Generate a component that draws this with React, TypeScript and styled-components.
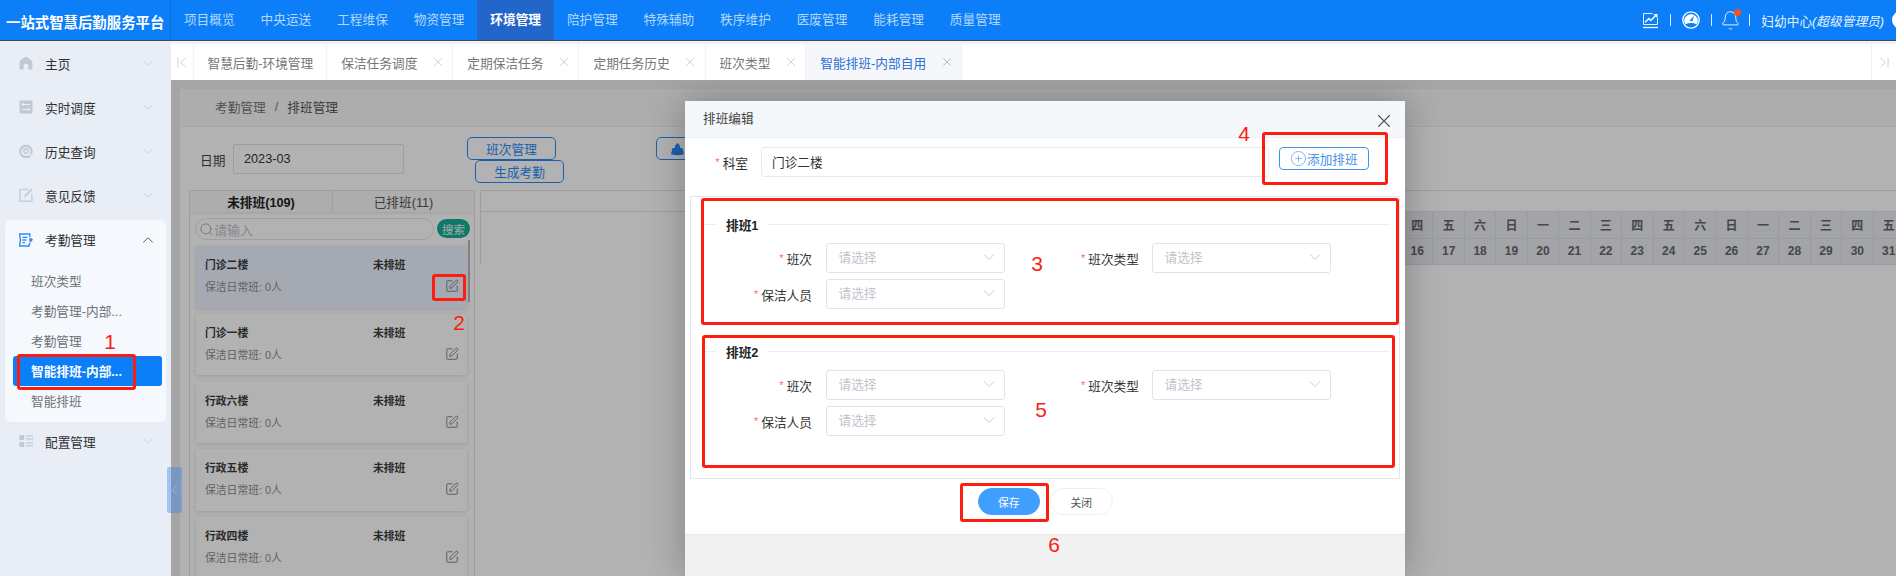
// App.tsx
import React from 'react';
import styled, { createGlobalStyle } from 'styled-components';
import { Bell, ChevronDown, ChevronFirst, ChevronLast, ChevronLeft, ChevronUp, CirclePlus, Search, SquarePen, X } from 'lucide-react';

const GlobalStyle = createGlobalStyle`
  html, body {
    margin: 0;
    padding: 0;
    overflow: hidden;
  }
  body {
    font-family: "Liberation Sans", "Noto Sans CJK SC", sans-serif;
    font-size: 12.7px;
    color: #303133;
  }
  * {
    box-sizing: border-box;
  }
`;

const Page = styled.div`
  position: relative;
  width: 1896px;
  height: 576px;
  overflow: hidden;
  display: flex;
  flex-direction: column;
  background: #fff;
`;

// top bar
const TopBar = styled.header`
  height: 41px;
  flex: none;
  display: flex;
  background: #0b7ef8;
  border-bottom: 1px solid #3d4a5c;
`;

const Logo = styled.div`
  width: 171px;
  flex: none;
  padding: 2px 0 0 6px;
  display: flex;
  align-items: center;
  color: #fff;
  font-size: 14.4px;
  font-weight: 700;
  white-space: nowrap;
  border-right: 1px solid #0a6bd2;
`;

const Nav = styled.nav`
  display: flex;
  flex: 1;
`;

const NavItem = styled.a<{ $active?: boolean }>`
  width: 76.6px;
  display: flex;
  justify-content: center;
  align-items: center;
  padding-bottom: 3px;
  font-size: 12.7px;
  white-space: nowrap;
  color: ${(p) => (p.$active ? '#fff' : '#b4d8fd')};
  font-weight: ${(p) => (p.$active ? 700 : 400)};
  background: ${(p) => (p.$active ? '#2266ca' : 'transparent')};
`;

const UserBar = styled.div`
  display: flex;
  align-items: center;
  flex: none;
  color: #fff;
  margin-right: -14px;
`;

const Sep = styled.span`
  width: 1px;
  height: 12px;
  background: #dcecff;
  margin: 0 11px;
`;

const BellBox = styled.span`
  position: relative;
  display: flex;
  margin: 0 -3px;
`;

const RedDot = styled.i`
  position: absolute;
  top: -1px;
  right: 0;
  width: 7px;
  height: 7px;
  border-radius: 50%;
  background: #f4511e;
`;

const UserName = styled.span`
  white-space: nowrap;
  color: #e8f3ff;
  margin-right: 8px;
  em {
    font-style: italic;
  }
`;

const Avatar = styled.span`
  width: 18px;
  height: 18px;
  border-radius: 50%;
  background: #fff;
`;

// sidebar
const Body = styled.div`
  flex: 1;
  display: flex;
  min-height: 0;
`;

const Sidebar = styled.aside`
  width: 171px;
  flex: none;
  background: #e9edf5;
`;

const MenuHead = styled.div<{ $open?: boolean }>`
  height: ${(p) => (p.$open ? '39px' : '44px')};
  display: flex;
  align-items: center;
  padding: 0 14px 0 19px;
  gap: 12px;
  svg:first-child {
    flex: none;
  }
  span {
    flex: 1;
    color: #303133;
  }
`;

const MenuCard = styled.div`
  margin: 3px 5px -3px;
  height: 202px;
  border-radius: 5px;
  background: #f5f8fc;
  ${MenuHead} {
    padding: 0 9px 0 14px;
  }
`;

const SubList = styled.div`
  padding-top: 7px;
`;

const SubItem = styled.div<{ $active?: boolean }>`
  height: 30px;
  margin: 0 4px 0 8px;
  padding: 0 0 2px 18px;
  display: flex;
  align-items: center;
  border-radius: 3px;
  white-space: nowrap;
  color: ${(p) => (p.$active ? '#fff' : '#6f7278')};
  font-weight: ${(p) => (p.$active ? 700 : 400)};
  background: ${(p) => (p.$active ? '#0b7ef8' : 'transparent')};
`;

const CollapseHandle = styled.div`
  position: absolute;
  left: 167px;
  top: 467px;
  width: 15px;
  height: 46px;
  display: flex;
  align-items: center;
  justify-content: center;
  border-radius: 2px;
  background: rgba(50, 130, 235, 0.38);
  color: #b9cfeb;
  z-index: 3;
`;

// main area
const Main = styled.main`
  flex: 1;
  min-width: 0;
  display: flex;
  flex-direction: column;
  background: #f0f2f5;
`;

const TabStrip = styled.div`
  height: 36px;
  margin-top: 3px;
  flex: none;
  display: flex;
  align-items: stretch;
  background: #fff;
`;

const TabArrow = styled.div<{ $end?: boolean }>`
  width: ${(p) => (p.$end ? '25px' : '22.5px')};
  flex: none;
  margin-left: ${(p) => (p.$end ? 'auto' : '0')};
  display: flex;
  align-items: center;
  justify-content: center;
  color: #c9c9c9;
  border-right: ${(p) => (p.$end ? '0' : '1px solid #f2f2f2')};
  border-left: ${(p) => (p.$end ? '1px solid #f2f2f2' : '0')};
`;

const Tab = styled.div<{ $active?: boolean; $plain?: boolean }>`
  display: flex;
  align-items: center;
  padding: 0 ${(p) => (p.$plain ? '13px' : '10px')} 0 14px;
  white-space: nowrap;
  border-right: 1px solid #f2f2f2;
  color: ${(p) => (p.$active ? '#2d6fd2' : '#767676')};
  background: ${(p) => (p.$active ? '#f5f7fa' : '#fff')};
  svg {
    margin: 0 -2.5px 0 13.5px;
    color: ${(p) => (p.$active ? '#8aa9dc' : '#bdbdbd')};
  }
`;

const Content = styled.div`
  position: relative;
  flex: 1;
  min-height: 0;
  padding: 9px 0 0 9px;
  display: flex;
  flex-direction: column;
  overflow: hidden;
  background: #ececec;
`;

const Breadcrumb = styled.div`
  height: 38px;
  flex: none;
  padding: 0 0 2px 35px;
  display: flex;
  align-items: center;
  gap: 9px;
  color: #777;
  background: #f8f8f9;
  border-bottom: 1px solid #efefef;
  b {
    font-weight: 400;
    color: #555;
  }
`;

const Panel = styled.div`
  flex: 1;
  min-height: 0;
  background: #fff;
`;

const Toolbar = styled.div`
  height: 63px;
  padding: 10px 0 0 20px;
  display: flex;
  align-items: flex-start;
`;

const DateLabel = styled.label`
  margin-top: 13px;
  width: 33px;
  color: #444;
`;

const DateInput = styled.div`
  margin-top: 7px;
  width: 171px;
  height: 30px;
  padding-left: 10px;
  display: flex;
  align-items: center;
  color: #333;
  border: 1px solid #e3e3e3;
  border-radius: 2px;
`;

const ButtonStack = styled.div`
  width: 98px;
  margin-left: 63px;
  display: flex;
  flex-direction: column;
`;

const OutlineButton = styled.button<{ $shift?: number }>`
  width: 89px;
  height: 23px;
  flex: none;
  margin-left: ${(p) => p.$shift || 0}px;
  padding: 0;
  font: inherit;
  font-size: 12.7px;
  color: #258cfb;
  background: #fff;
  border: 1px solid #258cfb;
  border-radius: 5px;
`;

const ShipButton = styled(OutlineButton)`
  margin-left: 91px;
  padding-left: 14px;
  display: flex;
  align-items: center;
`;

const Board = styled.div`
  height: 386px;
  padding-left: 9px;
  display: flex;
  align-items: flex-start;
`;

const ShiftColumn = styled.section`
  position: relative;
  width: 286px;
  height: 100%;
  flex: none;
  overflow: hidden;
  border: 1px solid #e3e3e3;
  border-bottom: 0;
`;

const ColumnTabs = styled.div`
  height: 21px;
  display: grid;
  grid-template-columns: 142px 1fr;
  background: #f8f8f8;
  box-shadow: 0 1px 3px rgba(0, 0, 0, 0.12);
`;

const ColumnTab = styled.div<{ $active?: boolean }>`
  display: flex;
  align-items: center;
  justify-content: center;
  color: ${(p) => (p.$active ? '#222' : '#555')};
  font-weight: ${(p) => (p.$active ? 700 : 400)};
  & + & {
    border-left: 1px solid #e3e3e3;
  }
`;

const SearchRow = styled.div`
  padding: 6px 0 0 5px;
  height: 34px;
  display: flex;
  align-items: flex-start;
  gap: 3px;
`;

const SearchBox = styled.div`
  width: 239px;
  height: 22px;
  padding-left: 3px;
  display: flex;
  align-items: center;
  color: #c0c4cc;
  font-size: 13px;
  border: 1px solid #e6e6e6;
  border-radius: 11px;
  svg {
    color: #8f9399;
  }
`;

const SearchButton = styled.button`
  width: 33px;
  height: 19px;
  margin-top: 1px;
  padding: 0;
  font: inherit;
  font-size: 11.5px;
  color: #e4f6f2;
  background: #14ae92;
  border: 0;
  border-radius: 10px;
`;

const CardList = styled.div`
  margin-left: 6px;
  width: 271px;
  display: flex;
  flex-direction: column;
  gap: 6.3px;
`;

const Card = styled.div<{ $selected?: boolean }>`
  height: 61.5px;
  flex: none;
  padding: 11px 8px 0 9px;
  display: grid;
  grid-template-columns: 168px 1fr;
  grid-template-rows: 14px 14px;
  row-gap: 8px;
  align-items: center;
  font-size: 10.8px;
  background: ${(p) => (p.$selected ? '#edf4ff' : '#fff')};
  box-shadow: 0 1px 4px rgba(0, 0, 0, 0.14);
  b {
    color: #3c3c3c;
  }
  span {
    color: #8c8c8c;
  }
  svg {
    justify-self: end;
    color: #555;
  }
`;

const Scrollbar = styled.i`
  position: absolute;
  left: 278px;
  top: 49px;
  width: 2px;
  height: 62px;
  background: #b9b9b9;
`;

const Schedule = styled.section`
  flex: 1;
  min-width: 0;
  margin-left: 5px;
  overflow: hidden;
  border-left: 1px solid #e3e3e3;
`;

const ScheduleHead = styled.div`
  height: 22px;
  border-top: 1px solid #e3e3e3;
  border-bottom: 1px solid #e3e3e3;
`;

const CalendarRow = styled.div`
  display: flex;
  height: 26.5px;
  margin-left: 921px;
`;

const CalendarCell = styled.div`
  width: 31.45px;
  flex: none;
  display: flex;
  align-items: center;
  justify-content: center;
  font-size: 12px;
  font-weight: 700;
  color: #666;
  background: #e8ebf0;
  border-right: 1px solid #dcdfe4;
  border-bottom: 1px solid #dcdfe4;
`;

const Overlay = styled.div`
  position: absolute;
  inset: 0;
  background: rgba(0, 0, 0, 0.3);
`;

// dialog
const Dialog = styled.div`
  position: absolute;
  left: 514px;
  top: 21px;
  bottom: 0;
  width: 720px;
  display: flex;
  flex-direction: column;
  background: #fff;
  box-shadow: 0 0 36px rgba(0, 0, 0, 0.28);
`;

const DialogHead = styled.div`
  height: 36.5px;
  flex: none;
  padding: 0 10px 2px 18px;
  display: flex;
  align-items: center;
  justify-content: space-between;
  color: #444;
  background: #f5f8fb;
  border-bottom: 1px solid #eef0f3;
  svg {
    margin-top: 7px;
    color: #555;
  }
`;

const DeptRow = styled.div`
  height: 58.5px;
  flex: none;
  padding-top: 9.5px;
  display: flex;
  align-items: flex-start;
`;

const FieldLabel = styled.label<{ $width: number }>`
  width: ${(p) => p.$width}px;
  height: 30px;
  flex: none;
  display: flex;
  align-items: center;
  justify-content: flex-end;
  color: #333;
  i {
    color: #f56c6c;
    font-style: normal;
    margin-right: 3px;
    font-size: 11px;
  }
`;

const DeptInput = styled.div`
  width: 508px;
  height: 30px;
  margin-left: 13px;
  padding: 0 0 2px 10px;
  display: flex;
  align-items: center;
  color: #333;
  border: 1px solid #e8eaef;
  border-radius: 3px;
`;

const AddButton = styled.button`
  width: 90px;
  height: 23px;
  margin-left: 10px;
  padding: 0 0 0 10px;
  display: flex;
  align-items: center;
  font: inherit;
  font-size: 12.7px;
  color: #4a8fe7;
  background: #fff;
  border: 1px solid #3f94ee;
  border-radius: 4px;
`;

const FormPanel = styled.div`
  height: 283px;
  flex: none;
  margin: 0 5px;
  padding-top: 20px;
  border: 1px solid #e4e7ed;
`;

const ShiftSection = styled.div`
  & + & {
    margin-top: 35px;
  }
`;

const Legend = styled.div`
  height: 15px;
  margin: 0 9px 11px 12px;
  display: flex;
  align-items: center;
  font-weight: 700;
  color: #222;
  &::before {
    content: '';
    width: 14px;
    height: 1px;
    margin-right: 9px;
    background: #ebeef5;
  }
  &::after {
    content: '';
    flex: 1;
    height: 1px;
    margin-left: 9px;
    background: #ebeef5;
  }
`;

const FormRow = styled.div`
  display: flex;
  height: 30px;
  & + & {
    margin-top: 6px;
  }
`;

const SelectBox = styled.div<{ $gap: number }>`
  width: 179px;
  height: 30px;
  flex: none;
  margin-left: ${(p) => p.$gap}px;
  padding: 0 5px 3px 12px;
  display: flex;
  align-items: center;
  justify-content: space-between;
  color: #c0c4cc;
  border: 1px solid #dfe3ea;
  border-radius: 3px;
`;

const DialogActions = styled.div`
  height: 55px;
  flex: none;
  padding-top: 9px;
  display: flex;
  justify-content: center;
  align-items: flex-start;
  gap: 10px;
`;

const PillButton = styled.button<{ $primary?: boolean }>`
  width: 62.5px;
  height: 27px;
  padding: 0;
  font: inherit;
  font-size: 10.8px;
  color: ${(p) => (p.$primary ? '#fff' : '#555')};
  background: ${(p) => (p.$primary ? '#409eff' : '#fff')};
  border: 1px solid ${(p) => (p.$primary ? '#409eff' : '#ebeef5')};
  border-radius: 14px;
`;

const DialogFoot = styled.div`
  flex: 1;
  background: #f1f1f1;
  border-top: 1px solid #e9e9e9;
`;

// red marks drawn over the screenshot
const MarkBox = styled.div<{ $x: number; $y: number; $w: number; $h: number }>`
  position: absolute;
  left: ${(p) => p.$x}px;
  top: ${(p) => p.$y}px;
  width: ${(p) => p.$w}px;
  height: ${(p) => p.$h}px;
  border: 3px solid #fb1d10;
  border-radius: 3px;
  z-index: 5;
`;

const MarkNumber = styled.span<{ $x: number; $y: number }>`
  position: absolute;
  left: ${(p) => p.$x}px;
  top: ${(p) => p.$y}px;
  transform: translate(-50%, -50%);
  font-size: 21px;
  line-height: 1;
  color: #fb1d10;
  z-index: 5;
`;

const navItems = ['项目概览', '中央运送', '工程维保', '物资管理', '环境管理', '陪护管理', '特殊辅助', '秩序维护', '医废管理', '能耗管理', '质量管理'];
const tabs = ['保洁任务调度', '定期保洁任务', '定期任务历史', '班次类型'];
const subItems = ['班次类型', '考勤管理-内部...', '考勤管理'];
const cards = ['门诊二楼', '门诊一楼', '行政六楼', '行政五楼', '行政四楼'];
const weekNames = ['日', '一', '二', '三', '四', '五', '六'];
// March 2023, the days left of the dialog are covered by it
const days = Array.from({ length: 16 }, (_, i) => i + 16);

const boxes = [
  { x: 17, y: 354, w: 119, h: 36 },
  { x: 432, y: 274, w: 34, h: 27 },
  { x: 1262, y: 132, w: 126, h: 53 },
  { x: 701, y: 198, w: 698, h: 127 },
  { x: 702, y: 335, w: 693, h: 133 },
  { x: 960, y: 483, w: 89, h: 39 },
];

const numbers = [
  { x: 110, y: 341, n: 1 },
  { x: 459, y: 322, n: 2 },
  { x: 1037, y: 263, n: 3 },
  { x: 1244, y: 133, n: 4 },
  { x: 1041, y: 409, n: 5 },
  { x: 1054, y: 544, n: 6 },
];

const HomeIcon = () => (
  <svg width="14" height="14" viewBox="0 0 14 14" fill="#c3c8d6">
    <path d="M7 .6c.4 0 5.8 3.9 6.2 5 .2.5.3 7.8.3 7.8H9.4V9.6c0-1-1-1.8-2.4-1.8s-2.4.8-2.4 1.8v3.8H.5s.1-7.3.3-7.8C1.2 4.5 6.6.6 7 .6z" />
  </svg>
);

const DispatchIcon = () => (
  <svg width="14" height="14" viewBox="0 0 14 14">
    <rect x=".5" y=".5" width="13" height="13" rx="1" fill="#c3c8d6" />
    <path d="M3 4.5h8M3 9.5h8" stroke="#e9edf5" strokeWidth="1.1" />
    <circle cx="4" cy="4.5" r="1.3" fill="#e9edf5" />
    <circle cx="10" cy="9.5" r="1.3" fill="#e9edf5" />
  </svg>
);

const HistoryIcon = () => (
  <svg width="14" height="14" viewBox="0 0 14 14" fill="none" stroke="#c3c8d6">
    <path d="M11.2 11.4A5.7 5.7 0 1 1 12.7 7c0 1.2-.3 2.3-.9 3.2" strokeWidth="2.2" />
    <circle cx="7" cy="7" r="2.2" strokeWidth="1.4" />
  </svg>
);

const FeedbackIcon = () => (
  <svg width="14" height="14" viewBox="0 0 14 14" fill="none" stroke="#c9cdd9" strokeWidth="1.5">
    <path d="M9 1.5H1v11.8h11.8V6" />
    <path d="M5.5 8.8 12.8 1.2" strokeWidth="2" />
  </svg>
);

const AttendanceIcon = () => (
  <svg width="16" height="14" viewBox="0 0 16 14" fill="none" stroke="#2f8cf5" strokeWidth="1.4" style={{ marginLeft: -1, marginRight: -1 }}>
    <path d="M11.8 4V1H1.6l.8 6-.8 6h9.4l.8-3" />
    <path d="M4.4 4.4h5M4.4 7h4M4.4 9.6h2.6" />
    <path d="M11 5.2h2.6l1.4 1.6-3 3.2" fill="#2f8cf5" stroke="none" />
  </svg>
);

const ConfigIcon = () => (
  <svg width="14" height="14" viewBox="0 0 14 14" fill="#c3c8d6">
    <rect x=".2" y="1" width="5.2" height="5" rx="1.5" />
    <rect x=".2" y="8" width="5.2" height="5" rx="1.5" />
    <path d="M7 1.2h7v1.4H7zM7 4.2h7v1.4H7zM7 8.2h7v1.4H7zM7 11.2h7v1.4H7z" />
  </svg>
);

const ChartIcon = () => (
  <svg width="17" height="17" viewBox="0 0 17 17" fill="none" stroke="#fff">
    <path d="M1.5 12.5v-11h9M15.5 6v6.500h-14" strokeWidth=".9" />
    <path d="M3.2 10.200 6.800 6.500l2 2L14 3.200" strokeWidth="1.500" />
    <path d="M11.200 2h4.300v4.300z" fill="#fff" stroke="none" />
    <path d="M1 15.500h15" strokeWidth="1.300" />
  </svg>
);

const GaugeIcon = () => (
  <svg width="18" height="18" viewBox="0 0 18 18">
    <circle cx="9" cy="9" r="8.2" fill="none" stroke="#fff" strokeWidth="1.300" />
    <path d="M3.300 13.200A6.600 6.600 0 1 1 14.700 13.200Q9 10.800 3.300 13.200z" fill="#fff" />
    <path d="M7.600 9.600 12.200 4.800 10.200 10.600z" fill="#0b7ef8" />
  </svg>
);

const ShipIcon = () => (
  <svg width="13" height="14" viewBox="0 0 13 14" fill="#258cfb">
    <path d="M6.500 1 9 3.800V6h2.500L13 12.300Q6.500 14.300 0 12.300L1.500 6H4V3.800z" />
  </svg>
);

const SelectField = () => (
  <>
    请选择
    <ChevronDown size={20} strokeWidth={0.9} color="#b5b9c2" />
  </>
);

const ShiftForm = ({ title }: { title: string }) => (
  <ShiftSection>
    <Legend>{title}</Legend>
    <FormRow>
      <FieldLabel $width={121}>
        <i>*</i>班次
      </FieldLabel>
      <SelectBox $gap={13.5}>
        <SelectField />
      </SelectBox>
      <FieldLabel $width={134.5}>
        <i>*</i>班次类型
      </FieldLabel>
      <SelectBox $gap={12.5}>
        <SelectField />
      </SelectBox>
    </FormRow>
    <FormRow>
      <FieldLabel $width={121}>
        <i>*</i>保洁人员
      </FieldLabel>
      <SelectBox $gap={13.5}>
        <SelectField />
      </SelectBox>
    </FormRow>
  </ShiftSection>
);

const App: React.FC = () => {
  return (
    <Page>
      <GlobalStyle />
      <TopBar>
        <Logo>一站式智慧后勤服务平台</Logo>
        <Nav>
          {navItems.map((item) => (
            <NavItem key={item} $active={item === '环境管理'}>
              {item}
            </NavItem>
          ))}
        </Nav>
        <UserBar>
          <ChartIcon />
          <Sep />
          <GaugeIcon />
          <Sep />
          <BellBox>
            <Bell size={21} strokeWidth={1} />
            <RedDot />
          </BellBox>
          <Sep />
          <UserName>
            妇幼中心<em>(超级管理员)</em>
          </UserName>
          <Avatar />
        </UserBar>
      </TopBar>

      <Body>
        <Sidebar>
          <MenuHead>
            <HomeIcon />
            <span>主页</span>
            <ChevronDown size={18} strokeWidth={1} color="#c4c7cf" />
          </MenuHead>
          <MenuHead>
            <DispatchIcon />
            <span>实时调度</span>
            <ChevronDown size={18} strokeWidth={1} color="#c4c7cf" />
          </MenuHead>
          <MenuHead>
            <HistoryIcon />
            <span>历史查询</span>
            <ChevronDown size={18} strokeWidth={1} color="#c4c7cf" />
          </MenuHead>
          <MenuHead>
            <FeedbackIcon />
            <span>意见反馈</span>
            <ChevronDown size={18} strokeWidth={1} color="#c4c7cf" />
          </MenuHead>
          <MenuCard>
            <MenuHead $open>
              <AttendanceIcon />
              <span>考勤管理</span>
              <ChevronUp size={18} strokeWidth={1.3} color="#555" />
            </MenuHead>
            <SubList>
              {subItems.map((item) => (
                <SubItem key={item}>{item}</SubItem>
              ))}
              <SubItem $active>智能排班-内部...</SubItem>
              <SubItem>智能排班</SubItem>
            </SubList>
          </MenuCard>
          <MenuHead>
            <ConfigIcon />
            <span>配置管理</span>
            <ChevronDown size={18} strokeWidth={1} color="#c4c7cf" />
          </MenuHead>
        </Sidebar>

        <Main>
          <TabStrip>
            <TabArrow>
              <ChevronFirst size={17} strokeWidth={1.3} />
            </TabArrow>
            <Tab $plain>智慧后勤-环境管理</Tab>
            {tabs.map((tab) => (
              <Tab key={tab}>
                {tab}
                <X size={14} strokeWidth={1.2} />
              </Tab>
            ))}
            <Tab $active>
              智能排班-内部自用
              <X size={14} strokeWidth={1.2} />
            </Tab>
            <TabArrow $end>
              <ChevronLast size={17} strokeWidth={1.3} />
            </TabArrow>
          </TabStrip>

          <Content>
            <Breadcrumb>
              考勤管理 <span>/</span> <b>排班管理</b>
            </Breadcrumb>
            <Panel>
              <Toolbar>
                <DateLabel>日期</DateLabel>
                <DateInput>2023-03</DateInput>
                <ButtonStack>
                  <OutlineButton>班次管理</OutlineButton>
                  <OutlineButton $shift={8}>生成考勤</OutlineButton>
                </ButtonStack>
                <ShipButton>
                  <ShipIcon />
                </ShipButton>
              </Toolbar>
              <Board>
                <ShiftColumn>
                  <ColumnTabs>
                    <ColumnTab $active>未排班(109)</ColumnTab>
                    <ColumnTab>已排班(11)</ColumnTab>
                  </ColumnTabs>
                  <SearchRow>
                    <SearchBox>
                      <Search size={15} strokeWidth={1.2} />
                      请输入
                    </SearchBox>
                    <SearchButton>搜索</SearchButton>
                  </SearchRow>
                  <CardList>
                    {cards.map((name, i) => (
                      <Card key={name} $selected={i === 0}>
                        <b>{name}</b>
                        <b>未排班</b>
                        <span>保洁日常班: 0人</span>
                        <SquarePen size={14} strokeWidth={1.2} />
                      </Card>
                    ))}
                  </CardList>
                  <Scrollbar />
                </ShiftColumn>
                <Schedule>
                  <ScheduleHead />
                  <CalendarRow>
                    {days.map((d) => (
                      <CalendarCell key={d}>{weekNames[(d + 2) % 7]}</CalendarCell>
                    ))}
                  </CalendarRow>
                  <CalendarRow>
                    {days.map((d) => (
                      <CalendarCell key={d}>{d}</CalendarCell>
                    ))}
                  </CalendarRow>
                </Schedule>
              </Board>
            </Panel>
            <Overlay />
            <Dialog>
              <DialogHead>
                排班编辑
                <X size={22} strokeWidth={1.2} />
              </DialogHead>
              <DeptRow>
                <FieldLabel $width={63}>
                  <i>*</i>科室
                </FieldLabel>
                <DeptInput>门诊二楼</DeptInput>
                <AddButton>
                  <CirclePlus size={17} strokeWidth={0.9} />
                  添加排班
                </AddButton>
              </DeptRow>
              <FormPanel>
                <ShiftForm title="排班1" />
                <ShiftForm title="排班2" />
              </FormPanel>
              <DialogActions>
                <PillButton $primary>保存</PillButton>
                <PillButton>关闭</PillButton>
              </DialogActions>
              <DialogFoot />
            </Dialog>
          </Content>
        </Main>
      </Body>

      <CollapseHandle>
        <ChevronLeft size={24} strokeWidth={1} />
      </CollapseHandle>

      {boxes.map((b) => (
        <MarkBox key={`${b.x}-${b.y}`} $x={b.x} $y={b.y} $w={b.w} $h={b.h} />
      ))}
      {numbers.map((m) => (
        <MarkNumber key={m.n} $x={m.x} $y={m.y}>
          {m.n}
        </MarkNumber>
      ))}
    </Page>
  );
};

export default App;
